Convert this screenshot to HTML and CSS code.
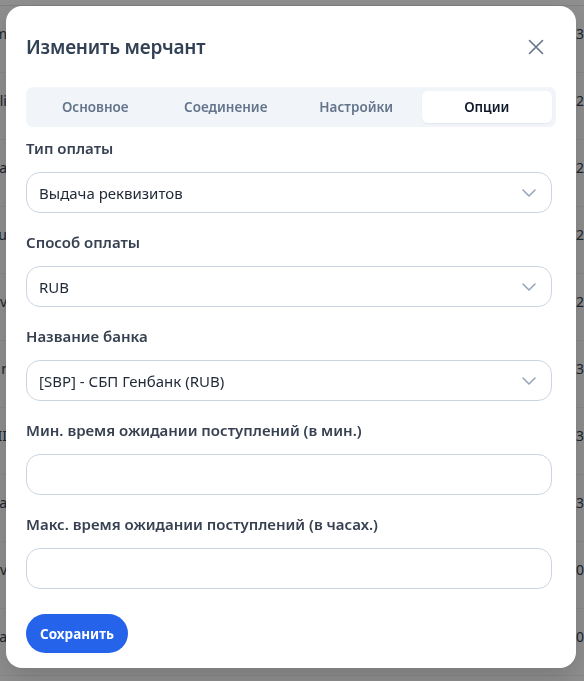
FILE: index.html
```html
<!DOCTYPE html>
<html lang="ru">
<head>
<meta charset="utf-8">
<title>Изменить мерчант</title>
<link rel="stylesheet" href="styles.css">
</head>
<body>
<div class="page">
  <div class="table">
    <div class="row"><span class="cell-l"><span>Merchant name m</span></span><span class="cell-r">31.05</span></div>
    <div class="row"><span class="cell-l"><span>Merchant li</span></span><span class="cell-r">27.05</span></div>
    <div class="row"><span class="cell-l"><span>Merchant na</span></span><span class="cell-r">26.05</span></div>
    <div class="row"><span class="cell-l"><span>Merchant u</span></span><span class="cell-r">24.05</span></div>
    <div class="row"><span class="cell-l"><span>Merchant v</span></span><span class="cell-r">22.05</span></div>
    <div class="row"><span class="cell-l"><span>Merchant r</span></span><span class="cell-r">39.05</span></div>
    <div class="row"><span class="cell-l"><span>Merchant II</span></span><span class="cell-r">37.05</span></div>
    <div class="row"><span class="cell-l"><span>Merchant a</span></span><span class="cell-r">34.05</span></div>
    <div class="row"><span class="cell-l"><span>Merchant v</span></span><span class="cell-r">01.05</span></div>
    <div class="row"><span class="cell-l"><span>Merchant a</span></span><span class="cell-r">06.05</span></div>
  </div>
</div>
<div class="overlay"></div>
<div class="modal">
  <div class="modal-header">
    <h2 class="modal-title">Изменить мерчант</h2>
    <button class="close-btn" type="button" aria-label="Закрыть">
      <svg width="26" height="26" viewBox="0 0 24 24" fill="none" stroke="currentColor" stroke-width="1.5" stroke-linecap="round"><path d="M18 6 6 18M6 6l12 12"/></svg>
    </button>
  </div>
  <div class="tabs">
    <div class="tab">Основное</div>
    <div class="tab">Соединение</div>
    <div class="tab">Настройки</div>
    <div class="tab active">Опции</div>
  </div>
  <form class="form">
    <div class="field">
      <label class="label">Тип оплаты</label>
      <div class="select"><span>Выдача реквизитов</span>
        <svg class="chev" width="14" height="8" viewBox="0 0 14 8" fill="none" stroke="currentColor" stroke-width="1.5" stroke-linecap="round" stroke-linejoin="round"><path d="M1 1l6 6 6-6"/></svg>
      </div>
    </div>
    <div class="field">
      <label class="label">Способ оплаты</label>
      <div class="select"><span>RUB</span>
        <svg class="chev" width="14" height="8" viewBox="0 0 14 8" fill="none" stroke="currentColor" stroke-width="1.5" stroke-linecap="round" stroke-linejoin="round"><path d="M1 1l6 6 6-6"/></svg>
      </div>
    </div>
    <div class="field">
      <label class="label">Название банка</label>
      <div class="select"><span>[SBP] - СБП Генбанк (RUB)</span>
        <svg class="chev" width="14" height="8" viewBox="0 0 14 8" fill="none" stroke="currentColor" stroke-width="1.5" stroke-linecap="round" stroke-linejoin="round"><path d="M1 1l6 6 6-6"/></svg>
      </div>
    </div>
    <div class="field">
      <label class="label">Мин. время ожидании поступлений (в мин.)</label>
      <div class="input"></div>
    </div>
    <div class="field">
      <label class="label">Макс. время ожидании поступлений (в часах.)</label>
      <div class="input"></div>
    </div>
    <div class="actions">
      <button class="save-btn" type="button">Сохранить</button>
    </div>
  </form>
</div>
</body>
</html>
```

FILE: styles.css
```css
* { box-sizing: border-box; }
html, body {
  margin: 0;
  padding: 0;
  width: 584px;
  height: 681px;
  overflow: hidden;
  font-family: "Noto Sans", "Open Sans", sans-serif;
}
.page {
  background: #ffffff;
  height: 681px;
  padding-top: 5px;
}
.table {
  border-top: 1px solid #e5e7eb;
}
.row {
  height: 67px;
  border-bottom: 1px solid #f1f3f5;
  display: flex;
  align-items: center;
  justify-content: space-between;
  font-size: 14px;
  color: #374151;
  padding-bottom: 12px;
}
.cell-l {
  width: 7px;
  overflow: hidden;
  display: flex;
  justify-content: flex-end;
  white-space: nowrap;
}
.cell-l span { flex: none; }
.cell-r {
  width: 8px;
  overflow: hidden;
  white-space: nowrap;
  display: flex;
  justify-content: flex-start;
}
.overlay {
  position: fixed;
  inset: 0;
  background: rgba(0, 0, 0, 0.44);
}
.modal {
  position: absolute;
  left: 6px;
  top: 6px;
  width: 570px;
  height: 662px;
  background: #ffffff;
  border-radius: 16px;
  padding: 0 20px 16px;
  box-shadow: 0 10px 25px rgba(0,0,0,0.15);
}
.modal-header {
  height: 81px;
  display: flex;
  align-items: center;
  justify-content: space-between;
}
.modal-title {
  margin: 0;
  font-size: 19px;
  font-weight: 600;
  color: #334155;
  letter-spacing: -0.2px;
}
.close-btn {
  width: 32px;
  height: 32px;
  margin-right: 4px;
  border: 0;
  background: transparent;
  padding: 0;
  display: flex;
  align-items: center;
  justify-content: center;
  color: #64748b;
}
.tabs {
  height: 40px;
  background: #f1f5f9;
  border-radius: 7px;
  padding: 4px;
  display: grid;
  grid-template-columns: repeat(4, 1fr);
}
.tab {
  display: flex;
  align-items: center;
  justify-content: center;
  font-size: 13.5px;
  font-weight: 600;
  color: #64748b;
  border-radius: 6px;
}
.tab.active {
  background: #ffffff;
  color: #0f172a;
  box-shadow: 0 1px 2px rgba(15,23,42,0.06);
}
.form {
  margin-top: 11px;
  display: flex;
  flex-direction: column;
  gap: 19px;
}
.field {
  display: flex;
  flex-direction: column;
  gap: 14px;
}
.label {
  font-size: 15px;
  line-height: 20px;
  font-weight: 600;
  color: #374151;
}
.select, .input {
  width: 526px;
  height: 41px;
  border: 1px solid #cbd5e1;
  border-radius: 14px;
  background: #ffffff;
  display: flex;
  align-items: center;
  justify-content: space-between;
  padding: 0 15px 0 12px;
  font-size: 15px;
  color: #1f2937;
}
.chev {
  color: #94a3b8;
  flex: none;
}
.actions {
  margin-top: 6px;
}
.save-btn {
  height: 39px;
  width: 102px;
  border: 0;
  border-radius: 20px;
  background: #2563eb;
  color: #ffffff;
  font-family: inherit;
  font-size: 13.5px;
  font-weight: 700;
  padding: 0;
}
```
